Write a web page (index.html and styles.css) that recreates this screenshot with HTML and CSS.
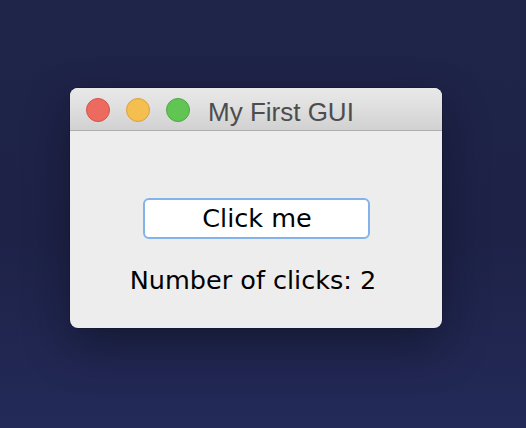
FILE: index.html
```html
<!DOCTYPE html>
<html>
<head>
<meta charset="utf-8">
<title>My First GUI</title>
<link rel="stylesheet" href="styles.css">
</head>
<body>
<div class="desktop">
  <div class="window">
    <div class="titlebar">
      <div class="lights">
        <span class="light close"></span>
        <span class="light min"></span>
        <span class="light max"></span>
      </div>
      <span class="title">My First GUI</span>
    </div>
    <div class="content">
      <button class="btn">Click me</button>
      <div class="label">Number of clicks: 2</div>
    </div>
  </div>
</div>
</body>
</html>
```
FILE: styles.css
```css
html, body {
  margin: 0;
  padding: 0;
  width: 526px;
  height: 428px;
  overflow: hidden;
}
body {
  background: linear-gradient(180deg, #1f2449 0%, #1e2247 55%, #232a58 100%);
}
.desktop {
  padding: 88px 0 0 70px;
}
.window {
  width: 372px;
  height: 240px;
  border-radius: 8px;
  overflow: hidden;
  background: #ededed;
  box-shadow: 0 18px 45px rgba(8, 10, 25, 0.45), 0 0 0 1px rgba(0,0,0,0.15);
  display: flex;
  flex-direction: column;
}
.titlebar {
  height: 42px;
  flex: none;
  background: linear-gradient(180deg, #e9e9e9 0%, #dedede 50%, #d1d1d1 100%);
  border-bottom: 1px solid #adadad;
  display: flex;
  align-items: flex-start;
  padding-left: 16px;
}
.lights {
  display: flex;
  gap: 16px;
  margin-top: 10px;
}
.light {
  width: 22px;
  height: 22px;
  border-radius: 50%;
  border: 1px solid;
  display: block;
}
.close { background: #ed6a5e; border-color: #d5544a; }
.min { background: #f5bf4f; border-color: #d9a23f; }
.max { background: #61c554; border-color: #4fa942; }
.title {
  margin-left: 18px;
  margin-top: 9px;
  font-family: "Liberation Sans", Arial, sans-serif;
  font-size: 26px;
  line-height: 30px;
  color: #4d4d4d;
}
.content {
  flex: 1;
  display: flex;
  flex-direction: column;
  align-items: center;
  padding-top: 67px;
}
.btn {
  width: 227px;
  height: 41px;
  box-sizing: border-box;
  background: #ffffff;
  border: 2px solid #84b3ec;
  border-radius: 6px;
  padding: 3px 0 0 2px;
  margin: 0;
  font-family: "DejaVu Sans", sans-serif;
  font-size: 25.5px;
  line-height: 30px;
  color: #000;
  display: flex;
  justify-content: center;
  align-items: flex-start;
}
.label {
  margin-top: 26px;
  margin-left: -6px;
  font-family: "DejaVu Sans", sans-serif;
  font-size: 25.5px;
  line-height: 30px;
  color: #000;
}
```
